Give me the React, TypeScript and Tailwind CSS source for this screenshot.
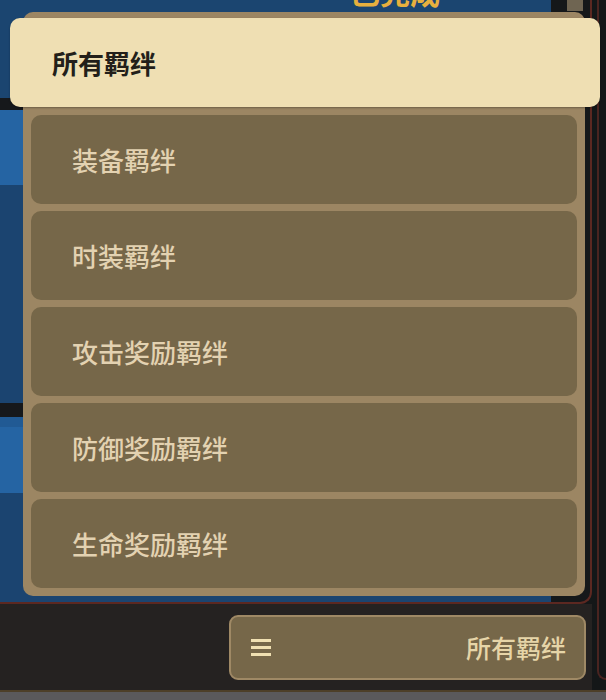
const items = ["装备羁绊", "时装羁绊", "攻击奖励羁绊", "防御奖励羁绊", "生命奖励羁绊"];

export default function App() {
  return (
    <div
      className="relative h-[700px] w-[606px] overflow-hidden bg-[#141718]"
      style={{ fontFamily: '"Noto Sans CJK SC", "Noto Sans", sans-serif' }}
    >
      <div className="flex h-[690px]">
        <div className="flex w-[592px] flex-col">
          <div className="flex h-[604px] rounded-br-[12px] border-b-2 border-r-2 border-[#5c2821] bg-[#15181a]">
            <div className="flex w-[551px] flex-col">
              <div className="h-[98px] overflow-hidden bg-[#1b4570]">
                <div className="-mt-[24px] ml-[350px] text-[30px] font-bold leading-[30px] text-[#e8b03e]">已完成</div>
              </div>
              <div className="h-[12px] bg-[#16181b]" />
              <div className="h-[75px] bg-[#2564a3]" />
              <div className="h-[218px] bg-[#1b4470]" />
              <div className="h-[14px] bg-[#16181b]" />
              <div className="h-[10px] bg-[#215a94]" />
              <div className="h-[66px] bg-[#2564a3]" />
              <div className="flex-1 bg-[#1b4470]" />
            </div>
            <div className="flex-1">
              <div className="ml-[16px] h-[11px] w-[16px] bg-[#6f6552]" />
            </div>
          </div>
          <div className="flex flex-1 justify-end bg-[#252221] pr-[6px] pt-[11px]">
            <div className="flex h-[65px] w-[357px] items-center justify-between rounded-[9px] border-2 border-[#9f8965] bg-[#766749] pl-[20px] pr-[18px]">
              <div className="flex w-[20px] flex-col gap-[4px]">
                <div className="h-[3px] bg-[#f0e0b2]" />
                <div className="h-[3px] bg-[#f0e0b2]" />
                <div className="h-[3px] bg-[#f0e0b2]" />
              </div>
              <span className="text-[25px] font-medium text-[#e6d5a8]">所有羁绊</span>
            </div>
          </div>
        </div>
        <div className="flex-1 pl-[5px]">
          <div className="h-[680px] rounded-bl-[10px] border-b-2 border-l-2 border-[#4a2420]" />
        </div>
      </div>
      <div className="h-[2px] bg-[#4d3f28]" />
      <div className="h-[8px] bg-[#5a595b]" />

      <div className="absolute left-[10px] top-[12px] w-[590px]">
        <div className="relative z-10 mt-[6px] flex h-[89px] items-center rounded-[10px] bg-[#efdfb3] pl-[42px] shadow-[0_1px_2px_rgba(0,0,0,0.3)]">
          <span className="text-[26px] font-bold text-[#231f1a]">所有羁绊</span>
        </div>
        <div className="-mt-[95px] ml-[13px] flex w-[562px] flex-col gap-[7px] rounded-[10px] bg-[#9c8663] px-[8px] pb-[8px] pt-[103px]">
          {items.map((label) => (
            <div key={label} className="flex h-[89px] items-center rounded-[10px] bg-[#766749] pl-[41px]">
              <span className="text-[26px] font-medium text-[#e3d2b1]">{label}</span>
            </div>
          ))}
        </div>
      </div>
    </div>
  );
}
